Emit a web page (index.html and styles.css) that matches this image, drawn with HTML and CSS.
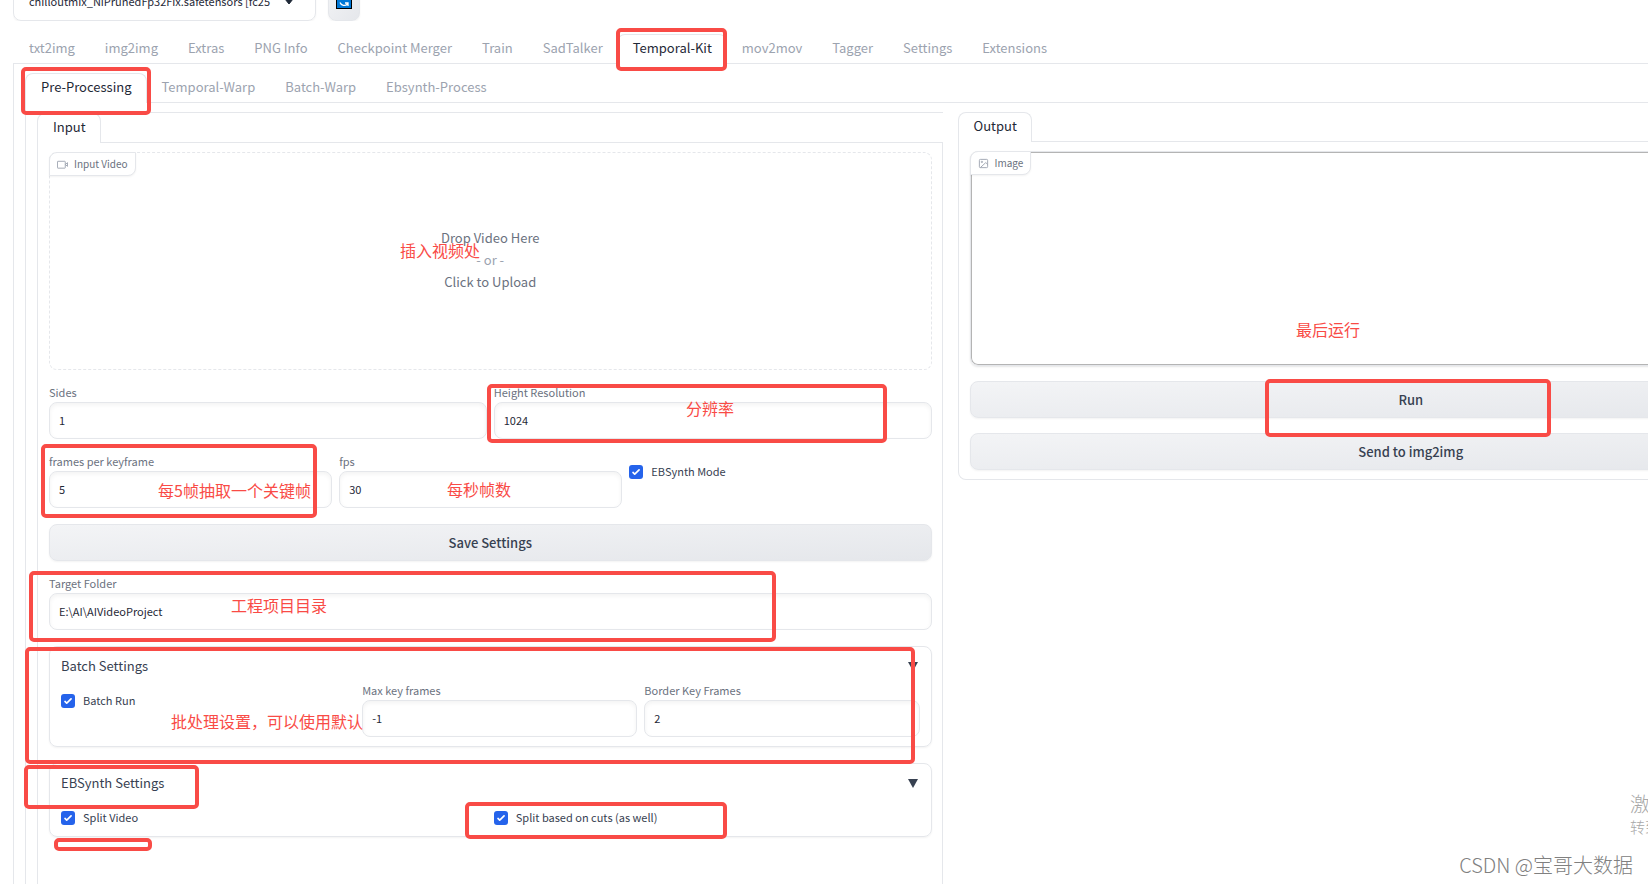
FILE: index.html
```html
<!DOCTYPE html>
<html lang="en">
<head>
<meta charset="utf-8">
<title>Temporal-Kit</title>
<link rel="stylesheet" href="styles.css">
</head>
<body>
<div class="screen">
  <main class="app">
    <header class="topbar">
      <button class="model" type="button"><span>chilloutmix_NiPrunedFp32Fix.safetensors [fc25</span><svg width="10" height="7" viewBox="0 0 10 7"><path d="M1 1h8L5 6z" fill="#1f2937" stroke="#1f2937"/></svg></button>
      <button class="refresh" type="button" aria-label="Refresh">
        <svg width="16" height="16" viewBox="0 0 16 16"><rect x=".5" y=".5" width="15" height="15" fill="#0078d7" stroke="#000"/><path d="M12 6.500A4.500 4.500 0 0 0 4.500 5M4 3v3h3M4 9.500A4.500 4.500 0 0 0 11.500 11M12 13v-3H9" fill="none" stroke="#fff" stroke-width="1.300"/></svg>
      </button>
    </header>

    <nav class="tabs">
      <button class="tab" type="button">txt2img</button>
      <button class="tab" type="button">img2img</button>
      <button class="tab" type="button">Extras</button>
      <button class="tab" type="button">PNG Info</button>
      <button class="tab" type="button">Checkpoint Merger</button>
      <button class="tab" type="button">Train</button>
      <button class="tab" type="button">SadTalker</button>
      <button class="tab selected" type="button">Temporal-Kit</button>
      <button class="tab" type="button">mov2mov</button>
      <button class="tab" type="button">Tagger</button>
      <button class="tab" type="button">Settings</button>
      <button class="tab" type="button">Extensions</button>
    </nav>
    <div class="panel grow">
      <nav class="tabs">
        <button class="tab selected" type="button">Pre-Processing</button>
        <button class="tab" type="button">Temporal-Warp</button>
        <button class="tab" type="button">Batch-Warp</button>
        <button class="tab" type="button">Ebsynth-Process</button>
      </nav>
      <div class="panel grow columns">
        <section class="column input-column">
          <nav class="tabs"><button class="tab selected" type="button">Input</button></nav>
          <div class="panel grow stack">
            <div class="dropzone">
              <div class="tag"><svg width="11" height="11" viewBox="0 0 24 24" fill="none" stroke="currentColor" stroke-width="2" stroke-linejoin="round"><path d="M23 8l-5 4 5 4z"/><rect x="1" y="5" width="17" height="15" rx="1"/></svg>Input Video</div>
              <button class="drop" type="button"><span>Drop Video Here</span><span class="or">- or -</span><span>Click to Upload</span></button>
            </div>
            <div class="row halves">
              <label class="field">Sides<input type="text" value="1"></label>
              <label class="field">Height Resolution<input type="text" value="1024"></label>
            </div>
            <div class="row thirds">
              <label class="field">frames per keyframe<input type="text" value="5"></label>
              <label class="field">fps<input type="text" value="30"></label>
              <label class="check"><input type="checkbox" checked>EBSynth Mode</label>
            </div>
            <button class="action" type="button">Save Settings</button>
            <label class="field">Target Folder<input type="text" value="E:\AI\AIVideoProject"></label>
            <section class="group">
              <button class="group-title" type="button"><span>Batch Settings</span><span class="arrow"></span></button>
              <div class="row batch">
                <label class="check"><input type="checkbox" checked>Batch Run</label>
                <label class="field">Max key frames<input type="text" value="-1"></label>
                <label class="field">Border Key Frames<input type="text" value="2"></label>
              </div>
            </section>
            <section class="group">
              <button class="group-title" type="button"><span>EBSynth Settings</span><span class="arrow"></span></button>
              <div class="row halves">
                <label class="check"><input type="checkbox" checked>Split Video</label>
                <label class="check"><input type="checkbox" checked>Split based on cuts (as well)</label>
              </div>
            </section>
          </div>
        </section>
        <section class="column">
          <nav class="tabs"><button class="tab selected" type="button">Output</button></nav>
          <div class="panel stack output">
            <div class="preview">
              <div class="tag"><svg width="11" height="11" viewBox="0 0 24 24" fill="none" stroke="currentColor" stroke-width="2" stroke-linejoin="round"><rect x="3" y="3" width="18" height="18" rx="2"/><circle cx="8.500" cy="8.500" r="1.500"/><path d="M21 14l-4-4L5 21"/></svg>Image</div>
            </div>
            <button class="action" type="button">Run</button>
            <button class="action" type="button">Send to img2img</button>
          </div>
        </section>
      </div>
    </div>
  </main>

  <div class="marks">
    <i class="box b-kit"></i><i class="box b-pre"></i><i class="box b-height"></i><i class="box b-frames"></i>
    <i class="box b-target"></i><i class="box b-batch"></i><i class="box b-eb"></i><i class="box b-line"></i>
    <i class="box b-cuts"></i><i class="box b-run"></i>
    <span class="note n-video">插入视频处</span>
    <span class="note n-height">分辨率</span>
    <span class="note n-frames">每5帧抽取一个关键帧</span>
    <span class="note n-fps">每秒帧数</span>
    <span class="note n-target">工程项目目录</span>
    <span class="note n-batch">批处理设置，可以使用默认</span>
    <span class="note n-run">最后运行</span>
    <span class="os-title">激活</span>
    <span class="os-text">转到</span>
    <span class="credit">CSDN @宝哥大数据</span>
  </div>
</div>
</body>
</html>
```
FILE: styles.css
```css
* { box-sizing: border-box; }
body {
  margin: 0;
  background: #fff;
  color: #1f2937;
  font: 13px/20px "Noto Sans CJK SC", sans-serif;
}
button, input { font: inherit; color: inherit; margin: 0; }
button { border: 0; background: none; padding: 0; }

.screen { position: relative; height: 100vh; overflow: hidden; }
.app {
  display: flex;
  flex-direction: column;
  width: calc(100% + 252px);
  min-height: calc(100% + 40px);
  padding: 0 13px;
}
.grow { flex: 1; }

.topbar { display: flex; align-items: flex-end; gap: 12px; height: 21px; margin-bottom: 13px; overflow: hidden; }
.model, .refresh {
  flex: none;
  height: 40px;
  border: 1px solid #e5e7eb;
  border-radius: 8px;
  box-shadow: 0 1px 2px #0000000d;
}
.model { display: flex; align-items: center; justify-content: space-between; width: 303px; padding: 0 21px 0 15px; font-size: 11px; white-space: nowrap; }
.refresh { display: flex; align-items: center; justify-content: center; width: 32px; background: linear-gradient(to bottom right, #f3f4f6, #e5e7eb); }

.tabs { display: flex; height: 30px; border-bottom: 1px solid #e5e7eb; }
.tab {
  height: 30px;
  margin-right: -1px;
  padding: 0 14px 3px 15px;
  border: 1px solid transparent;
  border-bottom: 0;
  border-radius: 8px 8px 0 0;
  color: #9ca3af;
  white-space: nowrap;
}
.tab.selected { background: #fff; border-color: #e5e7eb; color: #1f2937; }
.panel { display: flex; flex-direction: column; padding: 9px 11px; border: 1px solid #e5e7eb; border-top: 0; }
.panel.columns { flex-direction: row; align-items: stretch; gap: 15px; }
.column { display: flex; flex-direction: column; flex: 1; min-width: 0; }
.input-column { border-top: 1px solid #e5e7eb; }
.panel.stack { gap: 16px; padding-right: 10px; }
.panel.output { gap: 15px; border-radius: 0 0 8px 8px; }

.dropzone { height: 218px; border: 1px dashed #e5e7eb; border-radius: 8px; position: relative; }
.preview {
  position: relative;
  height: 215px;
  border: 1px solid #e5e7eb;
  border-radius: 8px;
  box-shadow: inset 0 0 0 1px #b4b4b4, 0 1px 2px #0000001a;
}
.tag {
  position: absolute;
  top: -1px;
  left: -1px;
  display: flex;
  align-items: center;
  gap: 6px;
  height: 24px;
  padding: 0 7px;
  border: 1px solid #e5e7eb;
  border-radius: 8px 0 8px 0;
  background: #fff;
  color: #6b7280;
  font-size: 10px;
  box-shadow: 0 1px 2px #0000000d;
}
.tag svg { color: #9ca3af; }
.drop { display: flex; flex-direction: column; align-items: center; justify-content: center; width: 100%; height: 100%; padding-bottom: 2px; line-height: 22px; color: #6b7280; }
.or { color: #9ca3af; }

.row { display: grid; gap: 7px; align-items: start; }
.halves { grid-template-columns: 1fr 1fr; }
.thirds { grid-template-columns: 284fr 284fr 303fr; }
.batch { grid-template-columns: 294fr 275fr 275fr; }
.field { display: flex; flex-direction: column; gap: 3px; color: #6b7280; font-size: 11px; line-height: 13px; }
.field input {
  width: 100%;
  height: 37px;
  padding: 0 9px 2px;
  border: 1px solid #e5e7eb;
  border-radius: 8px;
  background: #fff;
  color: #1f2937;
  box-shadow: inset 0 2px 4px #0000000d;
}
.check { display: flex; align-items: flex-start; gap: 8px; height: 16px; margin-top: 10px; font-size: 11px; line-height: 12px; color: #374151; }
.check input {
  appearance: none;
  width: 14px;
  height: 14px;
  border-radius: 3px;
  background: #2563eb url("data:image/svg+xml,%3Csvg xmlns='http://www.w3.org/2000/svg' viewBox='0 0 16 16' fill='white'%3E%3Cpath d='M12.200 4.800a1 1 0 0 1 0 1.400l-5 5a1 1 0 0 1-1.400 0l-2-2a1 1 0 0 1 1.400-1.400L6.500 9.100l4.300-4.300a1 1 0 0 1 1.400 0z'/%3E%3C/svg%3E");
}
.action {
  height: 37px;
  border: 1px solid #e5e7eb;
  border-radius: 8px;
  background: linear-gradient(to bottom right, #f3f4f6, #e5e7eb);
  color: #374151;
  font-weight: 500;
  box-shadow: 0 1px 2px #0000000d;
}
.group { padding: 11px 11px 9px; border: 1px solid #e5e7eb; border-radius: 8px; box-shadow: 0 1px 2px #0000000d; }
.group-title { display: flex; justify-content: space-between; align-items: center; width: 100%; margin-bottom: 10px; line-height: 16px; color: #374151; }
.arrow { margin-right: 2px; border: 5px solid transparent; border-top: 9px solid #374151; border-bottom: 0; }

/* Annotation layer drawn over the interface */
.marks { position: absolute; inset: 0; pointer-events: none; white-space: nowrap; }
.marks > * { position: absolute; }
.box { border: 4px solid #f94b46; border-radius: 5px; }
.b-kit { left: 616px; top: 28px; width: 111px; height: 43px; }
.b-pre { left: 21px; top: 67px; width: 130px; height: 48px; }
.b-height { left: 487px; top: 384px; width: 400px; height: 59px; }
.b-frames { left: 41px; top: 444px; width: 276px; height: 74px; }
.b-target { left: 29px; top: 571px; width: 747px; height: 71px; }
.b-batch { left: 25px; top: 647px; width: 890px; height: 117px; }
.b-eb { left: 24px; top: 765px; width: 175px; height: 44px; }
.b-line { left: 54px; top: 838px; width: 98px; height: 13px; }
.b-cuts { left: 465px; top: 802px; width: 262px; height: 37px; }
.b-run { left: 1265px; top: 379px; width: 286px; height: 58px; }
.note { color: #f94b46; font-size: 16px; line-height: 20px; }
.n-video { left: 400px; top: 240px; }
.n-height { left: 686px; top: 398px; }
.n-frames { left: 158px; top: 480px; }
.n-fps { left: 447px; top: 479px; }
.n-target { left: 231px; top: 595px; }
.n-batch { left: 171px; top: 711px; }
.n-run { left: 1296px; top: 319px; }
.os-title { left: 1630px; top: 794px; color: #a8a8a8; font-size: 20px; font-weight: 300; }
.os-text { left: 1630px; top: 817px; color: #a8a8a8; font-size: 15px; font-weight: 300; }
.credit { right: 15px; top: 855px; color: #808080; font-size: 20px; font-weight: 300; }
```
